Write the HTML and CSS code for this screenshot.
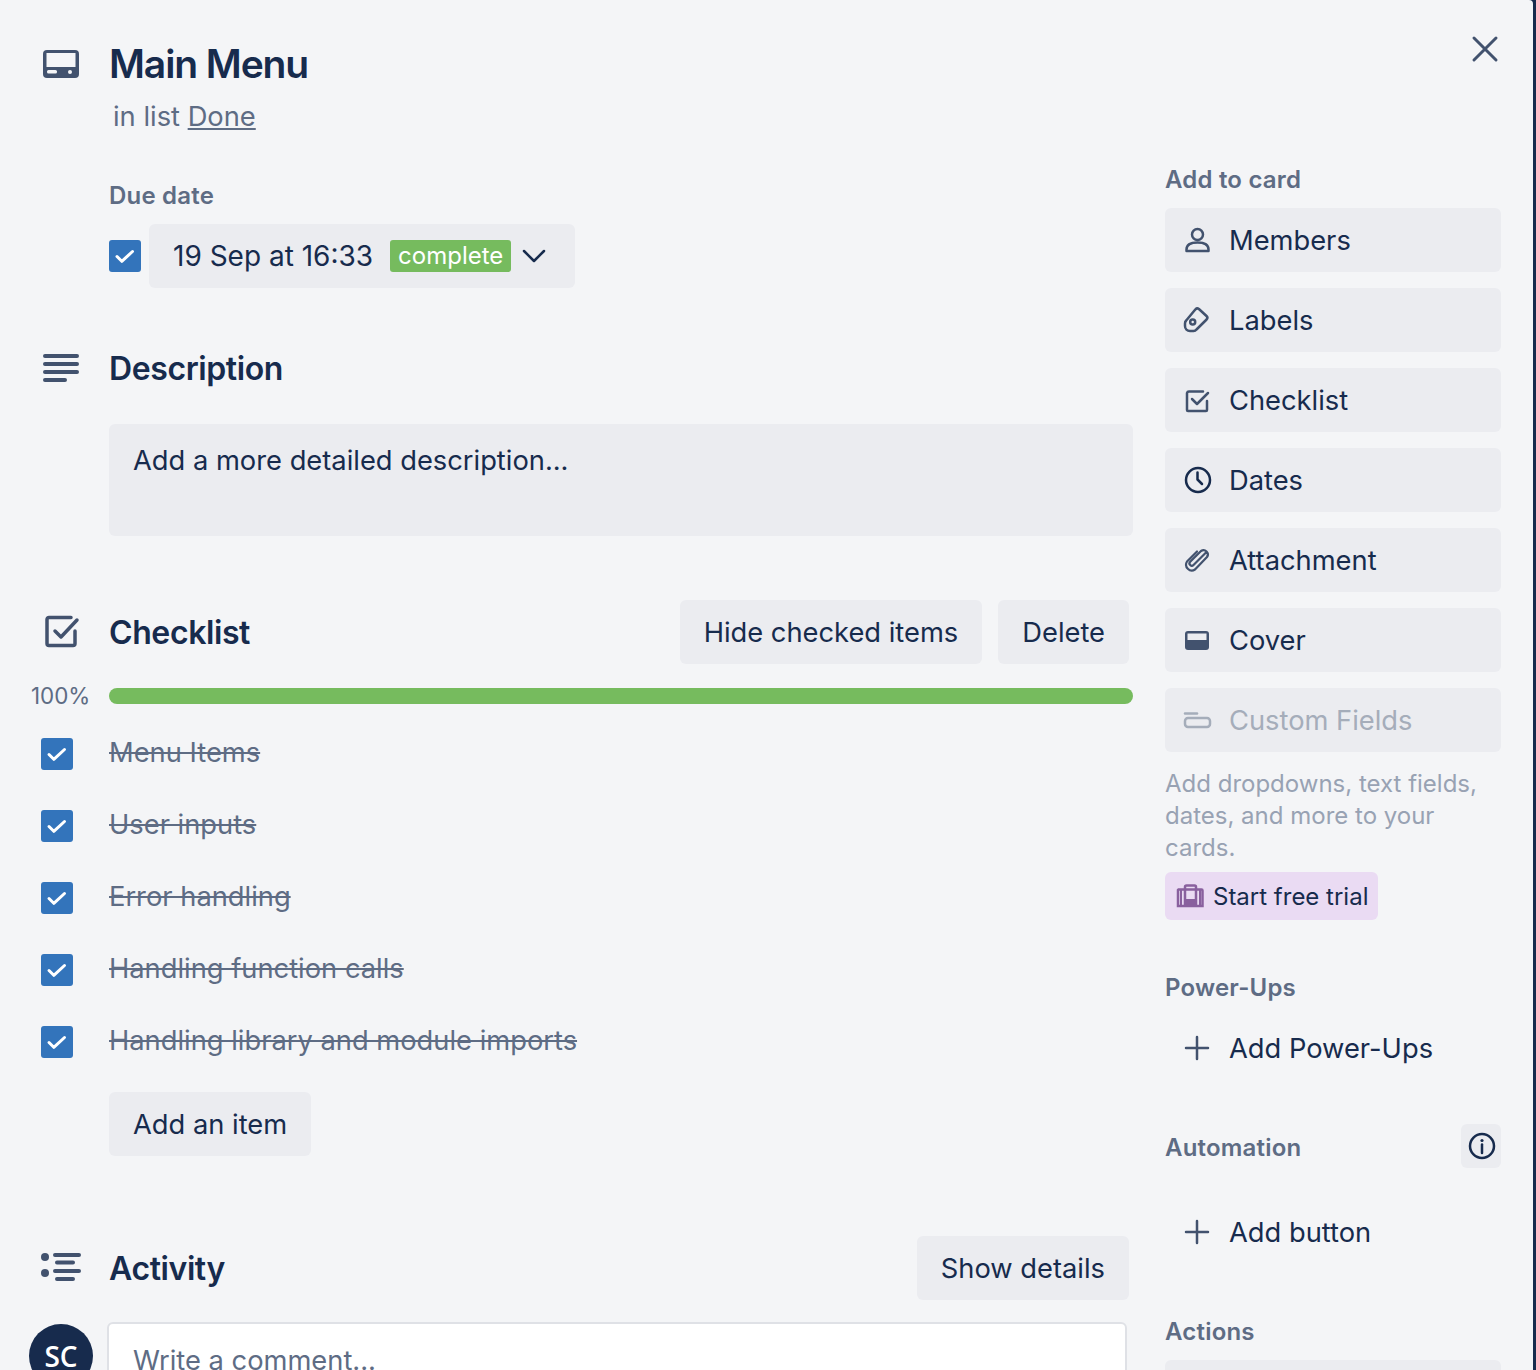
FILE: index.html
```html
<!doctype html>
<html>
	<head>
		<meta charset="utf-8"/>
		<title>Main Menu</title>
		<link rel="stylesheet" href="styles.css">
	</head>
	<body>
		<div class="card">
			<a class="close">
				<svg width="28" height="28" viewBox="0 0 28 28"><path d="M3 3L25 25M25 3L3 25" class="ic-stroke"/></svg>
			</a>
			<div class="main">
				<div class="title-row">
					<div class="gutter">
						<svg width="36" height="28" viewBox="0 0 36 28"><rect width="36" height="28" rx="4" class="ic-fill"/><rect x="3.5" y="3" width="29" height="14" fill="#f4f5f7"/><rect x="4" y="20" width="10" height="3.5" rx="1.5" fill="#f4f5f7"/><circle cx="27" cy="22" r="2" fill="#f4f5f7"/></svg>
					</div>
					<h1>Main Menu</h1>
				</div>
				<div class="sub">in list <a>Done</a></div>

				<div class="due">
					<div class="label">Due date</div>
					<div class="due-row">
						<span class="check"><svg width="32" height="32" viewBox="0 0 32 32"><path d="M8 16.5l4.800 4.800L23.500 11.500"/></svg></span>
						<div class="btn due-btn">
							<span class="due-text">19 Sep at 16:33</span>
							<span class="badge">complete</span>
							<svg class="chev" width="24" height="14" viewBox="0 0 24 14"><path d="M2 2l10 10L22 2"/></svg>
						</div>
					</div>
				</div>

				<div class="head-row desc-head">
					<div class="gutter">
						<svg width="36" height="28" viewBox="0 0 36 28"><path d="M2 2H34M2 10H34M2 18H34M2 26H22" class="ic-stroke thick"/></svg>
					</div>
					<h2>Description</h2>
				</div>
				<div class="indent">
					<div class="desc-box">Add a more detailed description...</div>
				</div>

				<div class="head-row check-head">
					<div class="gutter">
						<svg width="36" height="36" viewBox="0 0 36 36"><path d="M28 3.500H6a2 2 0 0 0-2 2v24a2 2 0 0 0 2 2h24a2 2 0 0 0 2-2V17" class="ic-stroke medium"/><path d="M12 17l6 6L34 6" class="ic-stroke medium"/></svg>
					</div>
					<h2>Checklist</h2>
					<div class="head-btns">
						<a class="btn">Hide checked items</a>
						<a class="btn">Delete</a>
					</div>
				</div>

				<div class="progress">
					<span class="pct">100%</span>
					<div class="bar"></div>
				</div>

				<ul class="items">
					<li><span class="check"><svg width="32" height="32" viewBox="0 0 32 32"><path d="M8 16.5l4.800 4.800L23.500 11.500"/></svg></span><span class="done">Menu Items</span></li>
					<li><span class="check"><svg width="32" height="32" viewBox="0 0 32 32"><path d="M8 16.5l4.800 4.800L23.500 11.500"/></svg></span><span class="done">User inputs</span></li>
					<li><span class="check"><svg width="32" height="32" viewBox="0 0 32 32"><path d="M8 16.5l4.800 4.800L23.500 11.500"/></svg></span><span class="done">Error handling</span></li>
					<li><span class="check"><svg width="32" height="32" viewBox="0 0 32 32"><path d="M8 16.5l4.800 4.800L23.500 11.500"/></svg></span><span class="done">Handling function calls</span></li>
					<li><span class="check"><svg width="32" height="32" viewBox="0 0 32 32"><path d="M8 16.5l4.800 4.800L23.500 11.500"/></svg></span><span class="done">Handling library and module imports</span></li>
				</ul>
				<div class="indent add-item">
					<a class="btn">Add an item</a>
				</div>

				<div class="head-row act-head">
					<div class="gutter act-icon">
						<svg width="40" height="28" viewBox="0 0 40 28"><circle cx="4" cy="3" r="4" class="ic-fill"/><circle cx="4" cy="19" r="4" class="ic-fill"/><path d="M14 1H38M16 8.500H32M14 17H38M16 25H32" class="ic-stroke thick"/></svg>
					</div>
					<h2>Activity</h2>
					<div class="head-btns">
						<a class="btn">Show details</a>
					</div>
				</div>
				<div class="comment-row">
					<div class="avatar">SC</div>
					<div class="comment">Write a comment...</div>
				</div>
			</div>

			<div class="side">
				<div class="label side-first">Add to card</div>
				<a class="btn side-btn">
					<svg width="28" height="28" viewBox="0 0 28 28"><circle cx="14.5" cy="8.5" r="5.5" class="ic-stroke thin"/><path d="M3.500 25v-1.500c0-5 5-7 11-7s11 2 11 7V25z" class="ic-stroke thin"/></svg>
					Members
				</a>
				<a class="btn side-btn">
					<svg width="28" height="28" viewBox="0 0 28 28"><path d="M12.500 3.300a2.500 2.500 0 0 1 3.400-.3l7.600 7a2.500 2.500 0 0 1 .1 3.500L13.500 23.500a4 4 0 0 1-3 1.500H7a5 5 0 0 1-5-5V17.500a4 4 0 0 1 1.200-3z" class="ic-stroke thin"/><circle cx="9.700" cy="16" r="2.500" class="ic-stroke thin"/></svg>
					Labels
				</a>
				<a class="btn side-btn">
					<svg width="28" height="28" viewBox="0 0 28 28"><path d="M20 5.500H6a2 2 0 0 0-2 1.500v17a1 1 0 0 0 1 1h18a1 1 0 0 0 1-1V15" class="ic-stroke thin"/><path d="M9 13l5 5L25 7" class="ic-stroke thin"/></svg>
					Checklist
				</a>
				<a class="btn side-btn">
					<svg width="28" height="28" viewBox="0 0 28 28"><circle cx="15" cy="14" r="12" class="ic-dark"/><path d="M14.500 6.500V13.500l4.500 4.500" class="ic-dark"/></svg>
					Dates
				</a>
				<a class="btn side-btn">
					<svg width="28" height="28" viewBox="0 0 28 28"><path d="M23 6.500l-12.500 12.500a2.300 2.300 0 0 1-3.300-3.300L18 5a4.300 4.300 0 0 1 6 6L12 23.500a5.800 5.800 0 0 1-8-8L14 5.500" class="ic-stroke slim"/></svg>
					Attachment
				</a>
				<a class="btn side-btn">
					<svg width="28" height="28" viewBox="0 0 28 28"><rect x="2" y="5" width="24" height="19" rx="3" class="ic-fill"/><rect x="4.500" y="7.500" width="19" height="6.500" fill="#ebecf0"/></svg>
					Cover
				</a>
				<a class="btn side-btn disabled">
					<svg width="28" height="28" viewBox="0 0 28 28"><path d="M2 7.500H14" class="ic-off"/><rect x="2" y="12" width="25" height="9" rx="3" class="ic-off"/></svg>
					Custom Fields
				</a>
				<p class="hint">Add dropdowns, text fields, dates, and more to your cards.</p>
				<a class="trial">
					<svg width="28" height="24" viewBox="0 0 28 24"><path d="M2.500 5.500H25.500a1 1 0 0 1 1 1V22H2V6z" fill="none" stroke="#89609e" stroke-width="2.500"/><path d="M9 22V3a1.500 1.500 0 0 1 1.500-1.500h8A1.500 1.500 0 0 1 20 3v19" fill="none" stroke="#89609e" stroke-width="2.500"/><rect x="10" y="15" width="9" height="8" fill="#89609e"/><path d="M5 6v16M24 6v16" stroke="#89609e" stroke-width="2"/></svg>
					Start free trial
				</a>

				<div class="label powerups">Power-Ups</div>
				<a class="side-btn plain">
					<svg width="28" height="28" viewBox="0 0 28 28"><path d="M14 3V25M3 14H25" class="ic-stroke thin"/></svg>
					Add Power-Ups
				</a>

				<div class="auto-head">
					<div class="label auto-label">Automation</div>
					<a class="info">
						<svg width="28" height="28" viewBox="0 0 28 28"><circle cx="15" cy="14" r="12" class="ic-dark"/><path d="M15 12.500V21" class="ic-dark"/><circle cx="15" cy="8.500" r="1.600" fill="#172b4d"/></svg>
					</a>
				</div>
				<a class="side-btn plain auto-add">
					<svg width="28" height="28" viewBox="0 0 28 28"><path d="M14 3V25M3 14H25" class="ic-stroke thin"/></svg>
					Add button
				</a>

				<div class="label actions">Actions</div>
				<a class="btn side-btn"></a>
			</div>
		</div>
	</body>
</html>
```

FILE: styles.css
```css
*{margin:0;padding:0;box-sizing:border-box;}
html,body{
	height:1370px;
	overflow:hidden;
}
body{
	background:#172b4d;
	font-family:Inter,"Liberation Sans",sans-serif;
	color:#172b4d;
	font-size:27.3px;
}
ul{
	list-style:none;
}
svg{
	display:block;
	flex:none;
	overflow:visible;
}
.ic-stroke{
	fill:none;
	stroke:#42526e;
	stroke-width:3;
	stroke-linecap:round;
	stroke-linejoin:round;
}
.ic-stroke.thick{stroke-width:4;}
.ic-stroke.medium{stroke-width:3.5;}
.ic-stroke.thin{stroke-width:2.5;}
.ic-stroke.slim{stroke-width:2.2;}
.ic-fill{fill:#42526e;}
.ic-dark{
	fill:none;
	stroke:#172b4d;
	stroke-width:2.5;
	stroke-linecap:round;
	stroke-linejoin:round;
}
.ic-off{
	fill:none;
	stroke:#a5adba;
	stroke-width:2.5;
	stroke-linecap:round;
}

.card{
	position:relative;
	display:flex;
	width:1533px;
	height:1370px;
	overflow:hidden;
	background:#f4f5f7;
	border-top-right-radius:4px;
}
.close{
	position:absolute;
	top:35px;
	left:1471px;
}
.main{
	width:1133px;
	padding-top:40px;
	flex:none;
}
.side{
	width:336px;
	margin-left:32px;
	flex:none;
	padding-top:164px;
}

.gutter{
	width:109px;
	padding-left:43px;
	flex:none;
}
.title-row{
	display:flex;
	align-items:center;
	height:48px;
}
h1{
	font-size:39px;
	line-height:48px;
	font-weight:600;
	letter-spacing:-1.1px;
}
h2{
	font-size:32px;
	font-weight:600;
	letter-spacing:-0.4px;
}
.sub{
	margin:13px 0 0 113px;
	line-height:32px;
	color:#5e6c84;
}
.sub a{
	text-decoration:underline;
}
.label{
	font-size:24px;
	line-height:32px;
	font-weight:600;
	letter-spacing:0.2px;
	color:#5e6c84;
}
.btn{
	display:inline-flex;
	align-items:center;
	height:64px;
	padding:0 24px;
	background:#ebecf0;
	border-radius:6px;
	color:#172b4d;
	white-space:nowrap;
}

.due{
	margin:47px 0 0 109px;
}
.due-row{
	display:flex;
	align-items:center;
	gap:8px;
	margin-top:12px;
}
.check{
	display:block;
	width:32px;
	height:32px;
	flex:none;
	background:#3374bb;
	border-radius:3px;
}
.check path{
	fill:none;
	stroke:#fff;
	stroke-width:3;
	stroke-linecap:round;
	stroke-linejoin:round;
}
.due-btn{
	width:426px;
}
.due-text{
	font-size:28px;
}
.badge{
	margin-left:17px;
	padding:0 8px;
	height:32px;
	line-height:32px;
	font-size:24px;
	background:#76bb5e;
	color:#fff;
	border-radius:3px;
}
.chev{
	margin-left:11px;
}
.chev path{
	fill:none;
	stroke:#172b4d;
	stroke-width:2.5;
	stroke-linecap:round;
	stroke-linejoin:round;
}

.head-row{
	display:flex;
	align-items:center;
	height:64px;
}
.head-btns{
	display:flex;
	gap:16px;
	margin-left:auto;
	padding-right:4px;
}
.desc-head{
	margin-top:48px;
}
.indent{
	margin-left:109px;
}
.desc-box{
	height:112px;
	margin-top:24px;
	padding:21px 24px;
	line-height:32px;
	background:#ebecf0;
	border-radius:6px;
}
.check-head{
	margin-top:64px;
}

.progress{
	display:flex;
	align-items:center;
	margin-top:24px;
	height:16px;
}
.pct{
	width:109px;
	padding-left:31px;
	margin-bottom:2px;
	flex:none;
	font-size:22.4px;
	color:#5e6c84;
}
.bar{
	flex:1;
	height:16px;
	background:#76bb5e;
	border-radius:8px;
}

.items{
	margin-top:12px;
}
.items li{
	display:flex;
	align-items:center;
	height:72px;
	padding-left:41px;
	gap:36px;
}
.items .check{
	margin-top:3px;
}
.done{
	color:#5e6c84;
	text-decoration:line-through;
}
.add-item{
	margin-top:16px;
}

.act-head{
	margin-top:80px;
}
.act-icon{
	padding-left:41px;
}
.comment-row{
	display:flex;
	margin-top:22px;
	padding-left:29px;
}
.avatar{
	width:64px;
	height:64px;
	margin-top:2px;
	margin-right:14px;
	flex:none;
	background:#172b4d;
	border-radius:50%;
	color:#fff;
	font-family:"Open Sans",sans-serif;
	font-size:28px;
	font-weight:600;
	line-height:64px;
	text-align:center;
}
.comment{
	width:1020px;
	height:120px;
	padding:20px 24px;
	background:#fff;
	border:2px solid #dfe1e6;
	border-radius:6px;
	color:#5e6c84;
}

.side-btn{
	display:flex;
	align-items:center;
	gap:18px;
	height:64px;
	padding:0 0 0 18px;
	margin-bottom:16px;
}
.side-first{
	margin-bottom:12px;
}
.side-btn.disabled{
	color:#a5adba;
}
.hint{
	font-size:24px;
	line-height:32px;
	color:#98a2b3;
}
.trial{
	display:inline-flex;
	align-items:center;
	gap:9px;
	width:213px;
	height:48px;
	margin-top:8px;
	padding-left:11px;
	background:#eadbf3;
	border-radius:6px;
	font-size:24px;
}
.powerups{
	margin-top:52px;
	margin-bottom:12px;
}
.plain{
	color:#172b4d;
	margin-bottom:0;
}
.auto-head{
	display:flex;
	align-items:center;
	justify-content:space-between;
	height:44px;
	margin-top:44px;
}
.auto-label{
	margin-top:4px;
}
.info{
	display:flex;
	align-items:center;
	justify-content:center;
	width:40px;
	height:44px;
	background:#ebecf0;
	border-radius:6px;
}
.auto-add{
	margin-top:32px;
}
.actions{
	margin-top:52px;
	margin-bottom:12px;
}
```
